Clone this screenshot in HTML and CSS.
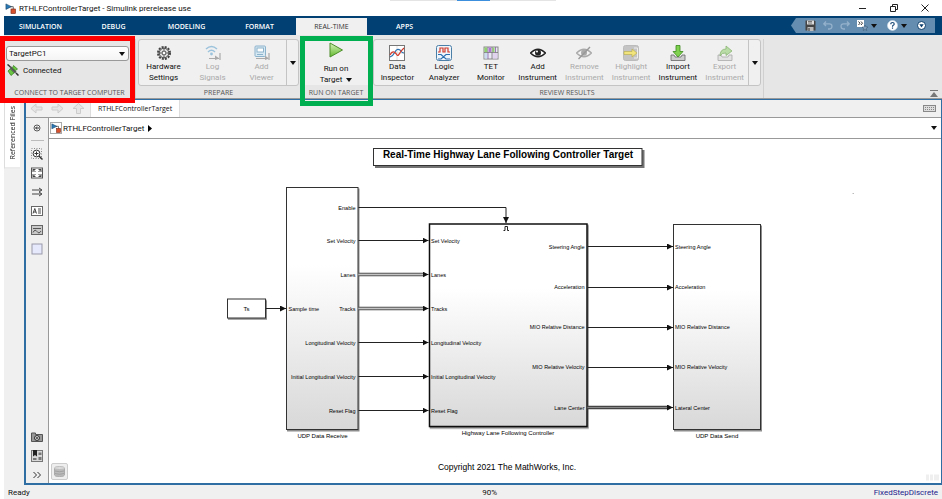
FILE: index.html
```html
<!DOCTYPE html>
<html lang="en">
<head>
    <meta charset="UTF-8">
    <meta name="viewport" content="width=device-width, initial-scale=1.0">
    <title>RTHLFControllerTarget - Simulink prerelease use</title>
    <link rel="stylesheet" href="styles.css">
</head>
<body>

<!-- Shared icon shapes -->
<svg class="defs" width="0" height="0" aria-hidden="true">
    <symbol id="model" viewBox="0 0 12 12">
        <path d="M1 1l6 3-6 3z" fill="#2a7ab8" stroke="#123a5c" stroke-width=".6"/>
        <path d="M6 4h3v3" fill="none" stroke="#333" stroke-width=".8"/>
        <rect x="6.500" y="6.500" width="5" height="5" fill="#d8522e" stroke="#6a2010" stroke-width=".6"/>
    </symbol>
    <symbol id="caret" viewBox="0 0 6 4"><path d="M0 0h6L3 4z" fill="#111"/></symbol>
</svg>

<header class="titlebar">
    <div class="grip"><span></span></div>
    <svg class="app-icon" viewBox="0 0 12 12"><use href="#model"/></svg>
    <h1>RTHLFControllerTarget - Simulink prerelease use</h1>
    <div class="window-buttons">
        <button aria-label="Minimize"><svg viewBox="0 0 8 8"><path d="M0 4.500h7"/></svg></button>
        <button aria-label="Restore"><svg viewBox="0 0 8 8"><path d="M.5 2.500h5v5h-5zM2.500 2.500v-2h5v5h-2"/></svg></button>
        <button aria-label="Close"><svg viewBox="0 0 8 8"><path d="M.5.5l7 7M7.500.5l-7 7"/></svg></button>
    </div>
</header>

<div class="app">
    <nav class="tabs">
        <button>SIMULATION</button>
        <button>DEBUG</button>
        <button>MODELING</button>
        <button>FORMAT</button>
        <button class="active">REAL-TIME</button>
        <button>APPS</button>
        <div class="quick">
            <button aria-label="Save"><svg width="11" height="11" viewBox="0 0 11 11"><path d="M.5.5h9l1 1v9H.5z" fill="#444"/><path d="M2 .5h7v4H2z" fill="#ddd"/><path d="M3 1.500h4M3 3h4" stroke="#777"/><path d="M2.500 7h6v4h-6z" fill="#bbb"/><path d="M4 8v3" stroke="#333"/></svg></button>
            <button aria-label="Undo"><svg width="10" height="9" viewBox="0 0 10 9"><path d="M3 .5L.8 2.800 3 5M1 2.800h5.500q2.500 0 2.500 2.500T6.500 8H5" fill="none" stroke="#94b1cb" stroke-width="1.300"/></svg></button>
            <button aria-label="Redo"><svg width="10" height="9" viewBox="0 0 10 9"><path d="M7 .5l2.200 2.300L7 5M9 2.800H3.500Q1 2.800 1 5.300T3.500 8H5" fill="none" stroke="#94b1cb" stroke-width="1.300"/></svg></button>
            <button aria-label="Shortcuts" class="drop"><svg width="11" height="11" viewBox="0 0 11 11"><path d="M0 0h7v7H0z" fill="#fff"/><path d="M1.500 1.500l1.500 1.700L1.500 5M4 1.500l1.500 1.700L4 5" fill="none" stroke="#222" stroke-width=".9"/><path d="M8 5l.9 1.900 2 .2-1.500 1.400.4 2L8 9.500l-1.800 1 .4-2L5 7.100l2.100-.2z" fill="#7d9dbb" stroke="#34536f" stroke-width=".5"/></svg><svg class="caret" viewBox="0 0 6 4"><use href="#caret"/></svg></button>
            <button aria-label="Help" class="drop"><svg width="11" height="11" viewBox="0 0 11 11"><circle cx="5.500" cy="5.500" r="5" fill="#fff" stroke="#cfe0ee" stroke-width=".6"/><path d="M3.800 4.200q0-1.700 1.700-1.700t1.700 1.500q0 .8-.9 1.300t-.8 1.400M5.500 7.600v1.200" fill="none" stroke="#1b4b78" stroke-width="1.200"/></svg><svg class="caret" viewBox="0 0 6 4"><use href="#caret"/></svg></button>
            <button aria-label="More"><svg width="9" height="9" viewBox="0 0 9 9"><circle cx="4.500" cy="4.500" r="4" fill="#fff" stroke="#0a3d6b" stroke-width="1"/><path d="M2.300 3.300h4.400L4.500 6.500z" fill="#0a3d6b"/></svg></button>
        </div>
    </nav>

    <div class="ribbon">
        <section class="group connect">
            <div class="group-body">
                <select aria-label="Target computer"><option>TargetPC1</option></select>
                <p class="state">
                    <svg width="12" height="12" viewBox="0 0 12 12"><path d="M.5.5l3 2.500M11.500 11.500L9 9" stroke="#333" stroke-width="1.500"/><path d="M2.500 4L4 2.300l5.500 5.500L8 9.500z" fill="#555"/><path d="M6.500 1.500l4 3.500-2 1.500L5.500 4zM1 7l2-2 4 4-3 2.500z" fill="#6cc644" stroke="#2f7d1a" stroke-width=".7"/></svg>
                    Connected
                </p>
            </div>
            <h2>CONNECT TO TARGET COMPUTER</h2>
        </section>

        <section class="group prepare">
            <div class="gallery">
                <button class="tool"><svg viewBox="0 0 16 16"><circle cx="8" cy="8" r="6" fill="none" stroke="#444" stroke-width="2" stroke-dasharray="2 1.140"/><circle cx="8" cy="8" r="4.800" fill="#ddd" stroke="#444" stroke-width="1"/><circle cx="8" cy="8" r="2" fill="#fff" stroke="#444"/><path d="M8 3.500v2M8 10.500v2M3.500 8h2M10.500 8h2" stroke="#555"/></svg>Hardware<br>Settings</button>
                <button class="tool" disabled><svg viewBox="0 0 16 16"><path d="M1 4q5.500-5 11 0M3 7q3.500-3.500 7 0" fill="none" stroke="#9cc3dc" stroke-width="1.500"/><circle cx="6.500" cy="9" r="1.400" fill="#9cc3dc"/><path d="M4 13.500h10M15 8v7" stroke="#aaa" stroke-width="1.200"/><path d="M10 10.500l4.500 3-4.500 1.500z" fill="#aaa"/></svg>Log<br>Signals</button>
                <button class="tool" disabled><svg viewBox="0 0 16 16"><rect x="1" y="1" width="10.500" height="10.500" rx="1" fill="#d8e9f3" stroke="#8bb3cc"/><rect x="3" y="3" width="6.500" height="4" fill="#fff" stroke="#8bb3cc"/><path d="M3 9.500h6" stroke="#8bb3cc"/><path d="M2 13.500h12M15 8v7" stroke="#aaa" stroke-width="1.200"/><path d="M11 10.500l4 3-4 1.500z" fill="#aaa"/></svg>Add<br>Viewer</button>
                <button class="expand" aria-label="More prepare tools"><svg class="caret" viewBox="0 0 6 4"><use href="#caret"/></svg></button>
            </div>
            <h2>PREPARE</h2>
        </section>

        <section class="group run">
            <div class="group-body">
                <button class="tool"><svg viewBox="0 0 16 16"><defs><linearGradient id="play" x2="0" y2="1"><stop stop-color="#d6f2b8"/><stop offset="1" stop-color="#62b92f"/></linearGradient></defs><path d="M2 1l12.500 7L2 15z" fill="url(#play)" stroke="#4c8f2a"/></svg>Run on<br>Target <svg class="caret" viewBox="0 0 6 4"><use href="#caret"/></svg></button>
            </div>
            <h2>RUN ON TARGET</h2>
        </section>

        <section class="group review">
            <div class="gallery">
                <button class="tool"><svg viewBox="0 0 16 16"><rect x=".5" y=".5" width="15" height="15" fill="#fff" stroke="#777"/><path d="M1 8h14M8 1v14" stroke="#ddd"/><path d="M1 12q3-1 5-5t5-2q2 3 4 3" fill="none" stroke="#2a6fb0" stroke-width="1.200"/><path d="M1 10q2-4 4-3t3 3 4-4l3-3" fill="none" stroke="#d43a2a" stroke-width="1.200"/></svg>Data<br>Inspector</button>
                <button class="tool"><svg viewBox="0 0 16 16"><rect x=".5" y=".5" width="15" height="15" rx="2" fill="#eef5fb" stroke="#4b7fa8"/><path d="M2 7h2V3h3v4h2V3h3v4h2" fill="none" stroke="#d43a2a" stroke-width="1.200"/><path d="M2 9.500h3l5 4.500h4M2 14h3l5-4.500h4" fill="none" stroke="#2a6fb0" stroke-width="1.200"/></svg>Logic<br>Analyzer</button>
                <button class="tool"><svg viewBox="0 0 16 16"><rect x="1" y="2" width="14" height="12" fill="#e9e9f4" stroke="#888"/><path d="M1.500 2.500h3V7h-3zM9.500 2.500h2V7h-2z" fill="#8fd26f"/><path d="M6 2.500h2V7H6z" fill="#b070d8"/><path d="M1.500 8h3v5.500h-3z" fill="#c9dcf0"/><path d="M9.500 8h5v5.500h-5z" fill="#e0d3ee"/><path d="M5 2v12M12.500 2v5.500" stroke="#8a5ba8" stroke-width=".8"/><path d="M1 7.500h14M9 2v12" stroke="#777" stroke-width=".8"/></svg>TET<br>Monitor</button>
                <button class="tool"><svg viewBox="0 0 16 16"><path d="M.5 8Q8 .5 15.500 8 8 15.500.5 8z" fill="#fff" stroke="#222" stroke-width="1.400"/><circle cx="8" cy="7.800" r="3" fill="#222"/><circle cx="7" cy="6.600" r="1" fill="#fff"/></svg>Add<br>Instrument</button>
                <button class="tool" disabled><svg viewBox="0 0 16 16"><path d="M.5 8Q8 .5 15.500 8 8 15.500.5 8z" fill="#f4f4f4" stroke="#aaa" stroke-width="1.300"/><circle cx="8" cy="7.800" r="3" fill="#aaa"/><path d="M2.500 14L14 2" stroke="#999" stroke-width="1.400"/></svg>Remove<br>Instrument</button>
                <button class="tool" disabled><svg viewBox="0 0 16 16"><rect x=".5" y=".5" width="15" height="15" rx="2" fill="#c4c4c4" stroke="#bbb"/><path d="M1 6.500h8V4l5 4-5 4V9.500H1z" fill="#f1e47c" stroke="#b5a94a" stroke-width=".6"/><path d="M11 3h3.500v10H11" fill="none" stroke="#eee"/></svg>Highlight<br>Instrument</button>
                <button class="tool"><svg viewBox="0 0 16 16"><path d="M1 10h3l1 2h6l1-2h3v5.500H1z" fill="#ccc" stroke="#666" stroke-width=".8"/><path d="M6 .5h4v6h3L8 12 3 6.500h3z" fill="#7fd14f" stroke="#3a8a1c" stroke-width=".8"/></svg>Import<br>Instrument</button>
                <button class="tool" disabled><svg viewBox="0 0 16 16"><path d="M1 10h3l1 2h6l1-2h3v5.500H1z" fill="#e2e2e2" stroke="#aaa" stroke-width=".8"/><path d="M3 11q0-7 6-7V1l6 5-6 4.500V8q-4-.5-6 3z" fill="#b9dba6" stroke="#8ab573" stroke-width=".8"/></svg>Export<br>Instrument</button>
                <button class="expand" aria-label="More instruments"><svg class="caret" viewBox="0 0 6 4"><use href="#caret"/></svg></button>
            </div>
            <h2>REVIEW RESULTS</h2>
        </section>

        <button class="collapse" aria-label="Collapse toolstrip"><svg width="8" height="7" viewBox="0 0 8 7"><path d="M0 .5h8" stroke="#777"/><path d="M0 7h8L4 2z" fill="#777"/></svg></button>
    </div>

    <div class="workspace">
        <aside class="dock"><button>Referenced Files</button></aside>

        <main class="editor">
            <div class="doc-tabs">
                <div class="nav">
                    <button aria-label="Back"><svg viewBox="0 0 13 11"><path d="M1 5.500L6 1v3h6v3H6v3z"/></svg></button>
                    <button aria-label="Forward"><svg viewBox="0 0 13 11"><path d="M12 5.500L7 1v3H1v3h6v3z"/></svg></button>
                    <button aria-label="Up"><svg viewBox="0 0 13 11"><path d="M6.500.5L12 5.500H8.500v5h-4v-5H1z"/></svg></button>
                </div>
                <button class="doc">RTHLFControllerTarget</button>
                <svg class="keyboard" width="13" height="7" viewBox="0 0 13 7"><rect x=".5" y=".5" width="12" height="6" fill="#ddd" stroke="#888"/><path d="M2 2.500h9M2 4.500h9" stroke="#888" stroke-dasharray="1 1"/></svg>
            </div>

            <div class="editor-body">
                <div class="palette">
                    <button aria-label="Hide explorer"><svg viewBox="0 0 12 12"><circle cx="6" cy="6" r="3" fill="#fff" stroke="#555"/><path d="M8 6H5M6 4.500L4.500 6 6 7.500" fill="none" stroke="#222"/></svg></button>
                    <hr>
                    <button aria-label="Zoom"><svg viewBox="0 0 12 12"><path d="M.5.5h10v10H.5z" fill="none" stroke="#888" stroke-dasharray="1 1.500"/><circle cx="5.500" cy="5.500" r="3.400" fill="#fff" stroke="#333"/><path d="M3.500 5.500h4M5.500 3.500v4" stroke="#333"/><path d="M8 8l3.500 3.500" stroke="#333" stroke-width="1.500"/></svg></button>
                    <button aria-label="Fit to view"><svg viewBox="0 0 12 12"><rect x=".5" y="1" width="11" height="10" fill="#fff" stroke="#555"/><path d="M2 5V2.500h2.500M10 5V2.500H7.500M2 7v2.500h2.500M10 7v2.500H7.500M2 2.500l2.500 2.500M10 2.500L7.500 5M2 9.500L4.500 7M10 9.500L7.500 7" fill="none" stroke="#444"/></svg></button>
                    <button aria-label="Sample time"><svg viewBox="0 0 12 12"><path d="M1 4h9M1 8h9M8 2l3 2-3 2M8 6l3 2-3 2" fill="none" stroke="#444"/></svg></button>
                    <button aria-label="Annotation"><svg viewBox="0 0 12 12"><rect x=".5" y="1.500" width="11" height="9" fill="#fff" stroke="#666"/><path d="M2 8.500L3.800 3.500 5.500 8.500M2.500 7h2.500M7 4h3M7 6h3M7 8h3" fill="none" stroke="#333" stroke-width=".9"/></svg></button>
                    <button aria-label="Image"><svg viewBox="0 0 12 12"><rect x=".5" y="1.500" width="11" height="9" fill="#c9c9c9" stroke="#666"/><path d="M2 4.500h8M2 8.500q2-4 4-1t4-.5" fill="none" stroke="#555"/></svg></button>
                    <button aria-label="Area"><svg viewBox="0 0 12 12"><rect x="1" y="1" width="10" height="10" fill="#e6e9fb" stroke="#99a"/></svg></button>
                    <button aria-label="Screenshot" class="bottom"><svg viewBox="0 0 12 12"><path d="M.5 2h4v1.500h7v7H.5z" fill="#999" stroke="#555"/><circle cx="6" cy="7" r="2.400" fill="#eee" stroke="#222"/><circle cx="6" cy="7" r="1" fill="#333"/></svg></button>
                    <button aria-label="Bookmarks"><svg viewBox="0 0 12 12"><rect x=".5" y=".5" width="11" height="11" fill="#d8d8d8" stroke="#777"/><path d="M2 0h4v6.500L4 5 2 6.500z" fill="#222"/><path d="M7.500 2.500h3v2.500h-3zM7.500 7h3v3h-3zM2 8h3.500v2H2z" fill="#777"/></svg></button>
                    <button aria-label="More palette items"><svg viewBox="0 0 12 12"><path d="M2.500 3L5.500 6 2.500 9M6.500 3L9.500 6 6.500 9" fill="none" stroke="#333"/></svg></button>
                </div>

                <div class="view">
                    <div class="breadcrumb">
                        <svg class="crumb-icon" viewBox="0 0 12 12"><use href="#model"/></svg>
                        <a href="#">RTHLFControllerTarget</a>
                        <svg width="4" height="7" viewBox="0 0 4 7"><path d="M0 0l4 3.500L0 7z"/></svg>
                        <svg class="caret end" viewBox="0 0 6 4"><use href="#caret"/></svg>
                    </div>

                    <!-- Model diagram, two units per screen pixel -->
                    <div class="canvas">
                        <svg class="diagram" viewBox="98 278 1784 686" preserveAspectRatio="xMidYMin meet">
                            <defs>
                                <linearGradient id="shade" x2="0" y2="1"><stop offset=".32" stop-color="#fff"/><stop offset="1" stop-color="#d8d8d8"/></linearGradient>
                                <marker id="arrow" viewBox="0 0 10 10" refX="10" refY="5" markerWidth="12" markerHeight="12" markerUnits="userSpaceOnUse" orient="auto"><path d="M0 0l10 5-10 5z" fill="#111"/></marker>
                                <filter id="drop" x="-5%" y="-5%" width="115%" height="130%"><feDropShadow dx="4" dy="4" stdDeviation="1.500" flood-color="#000" flood-opacity=".55"/></filter>
                                <filter id="soft" x="-5%" y="-5%" width="112%" height="115%"><feDropShadow dx="2" dy="3" stdDeviation="1.500" flood-color="#000" flood-opacity=".45"/></filter>
                            </defs>

                            <rect class="block" x="747" y="297" width="537" height="34" filter="url(#drop)"/>
                            <text class="heading" x="1016" y="315">Real-Time Highway Lane Following Controller Target</text>

                            <rect class="block" x="455" y="598" width="76" height="38" filter="url(#soft)"/>
                            <rect class="block shaded" x="573" y="375" width="143" height="484" filter="url(#soft)"/>
                            <rect class="block shaded thick" x="859" y="448" width="315" height="405" filter="url(#soft)"/>
                            <rect class="block shaded" x="1347" y="449" width="174" height="410" filter="url(#soft)"/>

                            <!-- Signals -->
                            <g class="bus">
                                <path class="rail" d="M717 549h132M717 617h132"/>
                                <path class="gap" d="M717 549h132M717 617h132"/>
                                <path class="dots" d="M717 549h132M717 617h132"/>
                                <path class="rail" d="M1175 815h162"/>
                                <path class="core" d="M1175 815h162"/>
                            </g>
                            <g class="wire">
                                <path d="M717 415h295v31"/>
                                <path d="M717 481h140"/>
                                <path d="M848 549h9"/>
                                <path d="M848 617h9"/>
                                <path d="M717 685h140"/>
                                <path d="M717 753h140"/>
                                <path d="M717 821h140"/>
                                <path d="M532 617h40"/>
                                <path d="M1175 493h171"/>
                                <path d="M1175 575h171"/>
                                <path d="M1175 655h171"/>
                                <path d="M1175 735h171"/>
                                <path d="M1337 815h9"/>
                            </g>
                            <path class="pulse" d="M1007 461h3v-8h5v8h3"/>

                            <!-- Port labels -->
                            <g class="port">
                                <text x="577" y="621">Sample time</text>
                                <text x="862" y="485">Set Velocity</text>
                                <text x="862" y="553">Lanes</text>
                                <text x="862" y="621">Tracks</text>
                                <text x="862" y="690">Longitudinal Velocity</text>
                                <text x="862" y="757">Initial Longitudinal Velocity</text>
                                <text x="862" y="825">Reset Flag</text>
                                <text x="1350" y="498">Steering Angle</text>
                                <text x="1350" y="578">Acceleration</text>
                                <text x="1350" y="658">MIO Relative Distance</text>
                                <text x="1350" y="738">MIO Relative Velocity</text>
                                <text x="1350" y="819">Lateral Center</text>
                            </g>
                            <g class="port out">
                                <text x="711" y="419">Enable</text>
                                <text x="711" y="485">Set Velocity</text>
                                <text x="711" y="553">Lanes</text>
                                <text x="711" y="621">Tracks</text>
                                <text x="711" y="690">Longitudinal Velocity</text>
                                <text x="711" y="757">Initial Longitudinal Velocity</text>
                                <text x="711" y="825">Reset Flag</text>
                                <text x="1169" y="498">Steering Angle</text>
                                <text x="1169" y="578">Acceleration</text>
                                <text x="1169" y="658">MIO Relative Distance</text>
                                <text x="1169" y="738">MIO Relative Velocity</text>
                                <text x="1169" y="819">Lane Center</text>
                            </g>
                            <g class="name">
                                <text x="493" y="621">Ts</text>
                                <text x="645" y="875">UDP Data Receive</text>
                                <text x="1016" y="869">Highway Lane Following Controller</text>
                                <text x="1434" y="875">UDP Data Send</text>
                            </g>
                            <text class="copyright" x="1014" y="939">Copyright 2021 The MathWorks, Inc.</text>
                            <path d="M1705 387h3" stroke="#bbb" stroke-width="2"/>
                            <path d="M1852 949h6v12h-6zM1860 949h6v12h-6zM1868 949h10v12h-10z" fill="#efefef"/>
                        </svg>
                        <button class="data-button" aria-label="Model data"><svg width="11" height="11" viewBox="0 0 11 11"><path d="M.5 2v7q0 1.500 5 1.500t5-1.500V2" fill="#bbb" stroke="#aaa"/><ellipse cx="5.500" cy="2" rx="5" ry="1.500" fill="#ddd" stroke="#bbb"/><path d="M1 5q4.500 1.500 9 0M1 7.500q4.500 1.500 9 0" fill="none" stroke="#999" stroke-width=".8"/></svg></button>
                    </div>
                </div>
            </div>
        </main>
    </div>

    <footer class="status">
        <span>Ready</span>
        <span>90%</span>
        <a href="#">FixedStepDiscrete</a>
    </footer>
</div>

</body>
</html>
```

FILE: styles.css
```css
* {
    box-sizing: border-box;
}
body {
    margin: 0;
    min-height: 100vh;
    display: flex;
    flex-direction: column;
    background: #fff;
    color: #111;
    font-family: Roboto, "Open Sans", sans-serif;
    font-size: 8px;
    line-height: 11px;
}
button {
    padding: 0;
    border: 0;
    background: none;
    color: inherit;
    font: inherit;
}
h1, h2, p {
    margin: 0;
    font-size: inherit;
    font-weight: normal;
}
svg {
    display: block;
    flex: none;
}
a {
    color: inherit;
    text-decoration: none;
}
.defs {
    position: absolute;
}
.caret {
    width: 6px;
    height: 4px;
}

/* Title bar */
.titlebar {
    position: relative;
    height: 16px;
    display: flex;
    align-items: center;
    gap: 3px;
    padding: 0 13px 0 5px;
}
.titlebar h1 {
    flex: 1;
}
.app-icon {
    width: 11px;
    height: 11px;
}
.grip {
    position: absolute;
    top: 0;
    left: 50%;
    width: 166px;
    height: 1px;
    margin-left: -81px;
    background: #e4e4e4;
}
.grip span {
    display: block;
    width: 33px;
    height: 1px;
    margin: 0 auto;
    background: #3c8fdd;
}
.window-buttons {
    display: flex;
    gap: 23px;
}
.window-buttons svg {
    width: 8px;
    height: 8px;
    fill: none;
    stroke: #222;
}

.app {
    flex: 1;
    display: flex;
    flex-direction: column;
    margin-left: 4px;
    background: #f0f0f0;
}

/* Toolstrip tabs */
.tabs {
    display: flex;
    align-items: flex-end;
    height: 19px;
    background: #004073;
    color: #fff;
    font-family: "Open Sans", sans-serif;
    font-size: 7px;
    font-weight: 600;
}
.tabs > button {
    width: 73px;
    height: 17px;
    padding-bottom: 1px;
}
.tabs > button.active {
    width: 71px;
    background: #f0f0f0;
    color: #333;
    font-weight: normal;
}
.tabs > button:last-of-type {
    width: 75px;
}
.quick {
    align-self: center;
    display: flex;
    align-items: center;
    gap: 7px;
    height: 15px;
    margin: 0 7px 0 auto;
    padding: 0 9px 0 14px;
    background: #658db0;
    clip-path: polygon(5px 0, 100% 0, 100% 100%, 5px 100%, 0 50%);
}
.quick .drop {
    display: flex;
    align-items: center;
    gap: 3px;
    margin-right: 3px;
}

/* Ribbon */
.ribbon {
    display: flex;
    height: 64px;
    padding-top: 4px;
    background: #e6e6e6;
    border-bottom: 1px solid #999;
}
.group {
    position: relative;
    display: flex;
    flex-direction: column;
    padding: 0 2px;
    border-right: 1px solid #d0d0d0;
}
.group h2 {
    margin-top: auto;
    color: #555;
    font-family: "Open Sans", sans-serif;
    font-size: 7px;
    line-height: 10px;
    text-align: center;
}
.connect {
    width: 132px;
}
.prepare {
    width: 166px;
}
.run {
    width: 69px;
}
.review {
    width: 393px;
}
.connect select {
    width: 123px;
    height: 15px;
    margin-top: 7px;
    padding: 0 2px;
    border: 1px solid #999;
    border-radius: 3px;
    appearance: none;
    color: inherit;
    font: inherit;
    background: linear-gradient(#fff, #f4f4f4);
}
.connect .group-body::after {
    content: "";
    position: absolute;
    top: 13px;
    right: 10px;
    border: 3px solid transparent;
    border-top: 4px solid #111;
    border-bottom: 0;
}
.state {
    display: flex;
    align-items: center;
    gap: 4px;
    margin-top: 3px;
    padding-left: 1px;
}

/* Callout frames around the two highlighted groups */
.connect::after,
.run::after {
    content: "";
    position: absolute;
    z-index: 1;
    pointer-events: none;
}
.connect::after {
    inset: -3px 0 -5px -4px;
    border: 5px solid #f00;
}
.run::after {
    inset: -3px -3px -8px -2px;
    border: 5px solid #00b050;
}

.gallery {
    display: flex;
    height: 47px;
    border: 1px solid #c4c4c4;
    border-radius: 3px;
    background: #f0f0f0;
}
.tool {
    flex: 1;
    width: 46px;
    display: block;
    padding-top: 3px;
    text-align: center;
    white-space: nowrap;
}
.gallery .tool {
    flex: 1 1 0;
    width: auto;
    min-width: 0;
}
.tool > svg:first-child {
    width: 16px;
    height: 16px;
    margin: 0 auto;
}
.tool:disabled {
    color: #aaa;
}
.tool .caret {
    display: inline-block;
    margin-left: 2px;
}
.expand {
    width: 12px;
    display: grid;
    place-items: center;
    border-left: 1px solid #c4c4c4;
}
.run .group-body {
    background: #f0f0f0;
}
.run .tool {
    width: 100%;
}
.run .tool > svg:first-child {
    margin-bottom: 5px;
}
.collapse {
    align-self: flex-end;
    margin: 0 4px 1px auto;
}

/* Editor area */
.workspace {
    flex: 1;
    display: flex;
}
.dock {
    width: 20px;
}
.dock button {
    padding: 8px 2px 6px;
    border: 1px solid #ddd;
    border-left: 0;
    background: #fff;
    font-family: "Open Sans", sans-serif;
    font-size: 7px;
    writing-mode: vertical-rl;
    transform: rotate(180deg);
}
.editor {
    flex: 1;
    display: flex;
    flex-direction: column;
    border: 2px solid #2f6ea3;
    border-width: 1px 1px 2px 2px;
}
.doc-tabs {
    display: flex;
    align-items: center;
    height: 18px;
    padding-left: 4px;
    border-bottom: 1px solid #999;
}
.nav {
    display: flex;
    gap: 8px;
    margin-right: 5px;
}
.nav svg {
    width: 13px;
    height: 11px;
    fill: #e6e6e6;
    stroke: #ccc;
}
.doc {
    align-self: stretch;
    padding: 0 7px;
    border: 1px solid #ddd;
    border-width: 0 1px;
    background: #fff;
    font-family: "Open Sans", sans-serif;
    font-size: 7px;
}
.keyboard {
    margin: 0 5px 0 auto;
}
.editor-body {
    flex: 1;
    display: flex;
}
.palette {
    width: 23px;
    display: flex;
    flex-direction: column;
    align-items: center;
    gap: 6px;
    padding: 3px 0 2px;
    border-right: 1px solid #999;
}
.palette button {
    height: 13px;
}
.palette svg {
    width: 12px;
    height: 12px;
}
.palette hr {
    width: 13px;
    height: 1px;
    margin: 0;
    border: 0;
    background: #bbb;
}
.palette .bottom {
    margin-top: auto;
}
.view {
    flex: 1;
    display: flex;
    flex-direction: column;
    background: #fff;
}
.breadcrumb {
    display: flex;
    align-items: center;
    height: 21px;
    padding: 0 4px 0 1px;
    border-bottom: 1px solid #999;
}
.crumb-icon {
    width: 12px;
    height: 12px;
    margin-right: 1px;
    border: 1px solid #aaa;
}
.breadcrumb a {
    margin-right: 4px;
}
.breadcrumb .end {
    margin-left: auto;
}
.canvas {
    position: relative;
    flex: 1;
}
.data-button {
    position: absolute;
    left: 2px;
    bottom: 3px;
    width: 17px;
    height: 17px;
    display: grid;
    place-items: center;
    border: 1px solid #ccc;
    border-radius: 2px;
    background: #eee;
}

/* Diagram */
.diagram {
    width: 100%;
    font-family: "Liberation Sans", Arial, sans-serif;
    fill: #000;
}
.block {
    fill: #fff;
    stroke: #333;
    stroke-width: 2;
}
.shaded {
    fill: url(#shade);
}
.thick {
    stroke: #111;
    stroke-width: 3;
}
.wire path {
    fill: none;
    stroke: #222;
    stroke-width: 2;
    marker-end: url(#arrow);
}
.rail {
    stroke: #444;
    stroke-width: 7;
}
.gap {
    stroke: #fff;
    stroke-width: 3;
}
.dots {
    stroke: #888;
    stroke-width: 2;
    stroke-dasharray: 2 2;
}
.core {
    stroke: #888;
    stroke-width: 2;
}
.pulse {
    fill: none;
    stroke: #222;
    stroke-width: 2;
}
.port {
    font-size: 11px;
}
.out {
    text-anchor: end;
}
.name {
    font-size: 12px;
    text-anchor: middle;
}
.heading {
    font-size: 20px;
    font-weight: bold;
    text-anchor: middle;
}
.copyright {
    font-size: 17px;
    text-anchor: middle;
}

/* Status bar */
.status {
    display: grid;
    grid-template-columns: 51% 1fr auto;
    padding: 2px 4px 1px;
}
.status a {
    color: #22228c;
}
```
